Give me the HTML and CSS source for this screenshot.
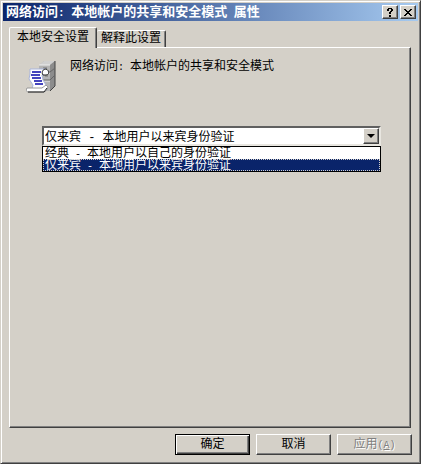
FILE: index.html
```
<!DOCTYPE html>
<html lang="zh-CN">
<head>
  <meta charset="UTF-8" />
  <meta name="viewport" content="width=device-width, initial-scale=1.0"/>
  <title>网络访问: 本地帐户的共享和安全模式 属性</title>
  <link rel="stylesheet" href="styles.css">
</head>
<body>
  <form class="window">
    <header class="titlebar">
      <h1>网络访问<span class="latin">: </span>本地帐户的共享和安全模式<span class="latin"> </span>属性</h1>
      <button type="button" class="caption-btn" aria-label="帮助">
        <svg width="6" height="9" viewBox="0 0 6 9" shape-rendering="crispEdges"><path d="M1 0h4v1h1v2h-1v1h-1v2h-2v-2h1v-1h1v-2h-2v2h-2v-2h1zM2 7h2v2h-2z"/></svg>
      </button>
      <button type="button" class="caption-btn close" aria-label="关闭">
        <svg width="8" height="7" viewBox="0 0 8 7" shape-rendering="crispEdges"><path d="M0 0h2v1h1v1h2v-1h1v-1h2v1h-1v1h-1v1h-1v1h1v1h1v1h1v1h-2v-1h-1v-1h-2v1h-1v1h-2v-1h1v-1h1v-1h1v-1h-1v-1h-1v-1h-1z"/></svg>
      </button>
    </header>

    <main class="content">
      <div class="tabs" role="tablist">
        <button type="button" class="tab active" role="tab" aria-selected="true">本地安全设置</button>
        <button type="button" class="tab" role="tab" aria-selected="false">解释此设置</button>
      </div>

      <section class="panel" role="tabpanel">
        <div class="policy">
          <svg class="policy-icon" width="32" height="32" viewBox="0 0 32 32">
            <!-- server -->
            <path d="M13 4l5-4h11v25l-5 5H13z" fill="#b4b4b4"/>
            <path d="M13 4l5-4h11l-5 4z" fill="#d0d0d0"/>
            <path d="M24 4l5-4v25l-5 5z" fill="#8c8c8c"/>
            <path d="M29 0v25l-5 5" fill="none" stroke="#444"/>
            <path d="M13 4h11M14 12h10M14 20h10" stroke="#eee"/>
            <path d="M14 11h10l5-4M14 19h10l5-5" fill="none" stroke="#666"/>
            <path d="M17 7h4M19 15h3" stroke="#777"/>
            <!-- scroll -->
            <path d="M4 8h16c-3 1-3 4-2 6h-2l1 5 3 5-1 4H6l1-4-4-6 1-5z" fill="#fff" stroke="#a8b4dc"/>
            <path d="M17 14c-2-3 0-6 3-6 3 1 4 6 0 6z" fill="#fff" stroke="#222"/>
            <path d="M1 27h15l4-3 2 2-2 4-2 1H2c-2 0-2-3-1-4z" fill="#fff" stroke="#999"/>
            <path d="M2 31h16l3-4" fill="none" stroke="#222"/>
            <path d="M6 11h9M5 14h9M6 17h9M8 20h8M9 23h8" stroke="#0808a8" stroke-width="1.300"/>
          </svg>
          <label for="mode">网络访问<span class="latin">: </span>本地帐户的共享和安全模式</label>
        </div>

        <div class="combo">
          <select id="mode" name="mode">
            <option>经典 - 本地用户以自己的身份验证</option>
            <option selected>仅来宾 - 本地用户以来宾身份验证</option>
          </select>
          <span class="arrow" aria-hidden="true"><svg width="8" height="4" viewBox="0 0 8 4"><path d="M0 0h8L4 4z"/></svg></span>
          <ul class="dropdown" role="listbox">
            <li role="option">经典<span class="latin"> - </span>本地用户以自己的身份验证</li>
            <li role="option" class="selected" aria-selected="true">仅来宾<span class="latin"> - </span>本地用户以来宾身份验证</li>
          </ul>
        </div>
      </section>
    </main>

    <footer class="buttons">
      <button type="submit" class="btn default">确定</button>
      <button type="button" class="btn">取消</button>
      <button type="button" class="btn" disabled>应用<span class="latin">(<u>A</u>)</span></button>
    </footer>
  </form>
</body>
</html>
```
FILE: styles.css
```
* {
  box-sizing: border-box;
}
body {
  margin: 0;
  font-family: "Liberation Mono", "Noto Sans CJK SC", monospace;
  font-size: 12px;
  line-height: 16px;
  color: #000;
  background: #d4d0c8;
}
button, select {
  font: inherit;
  color: inherit;
  padding: 0;
  border-radius: 0;
}
.latin {
  font-size: 10px;
  line-height: 1;
  white-space: pre;
}
.window {
  display: flex;
  flex-direction: column;
  min-height: 100vh;
  padding: 2px 2px 8px 2px;
  background: #d4d0c8;
  border: 1px solid;
  border-color: #d4d0c8 #404040 #404040 #d4d0c8;
  box-shadow: inset 1px 1px #fff, inset -1px -1px #808080;
}

/* title bar */
.titlebar {
  display: flex;
  align-items: center;
  height: 18px;
  padding: 0 2px 0 3px;
  background: linear-gradient(to right, #0a246a, #a6caf0);
}
.titlebar h1 {
  flex: 1;
  margin: 0;
  padding-top: 2px;
  font-size: 13px;
  line-height: 18px;
  color: #fff;
  white-space: nowrap;
}
.titlebar .latin {
  font-size: 11px;
}
.caption-btn {
  display: flex;
  align-items: center;
  justify-content: center;
  width: 16px;
  height: 14px;
  background: #d4d0c8;
  border: 1px solid;
  border-color: #fff #404040 #404040 #fff;
  box-shadow: inset -1px -1px #808080;
}
.close {
  margin-left: 2px;
}

/* tabs */
.content {
  display: flex;
  flex: 1;
  flex-direction: column;
  padding: 6px 7px 6px 6px;
}
.tabs {
  display: flex;
  align-items: flex-end;
  height: 20px;
}
.tab {
  height: 17px;
  padding: 0 4px;
  background: #d4d0c8;
  border: 1px solid;
  border-color: #fff #404040 transparent #fff;
  border-bottom: 0;
  border-radius: 2px 2px 0 0;
  box-shadow: inset -1px 0 #808080;
}
.tab.active {
  position: relative;
  height: 21px;
  margin-bottom: -1px;
  padding: 0 7px;
}
.tab:not(.active) {
  border-left: 0;
}
.panel {
  flex: 1;
  padding: 13px 29px 13px 16px;
  border: 1px solid;
  border-color: #fff #404040 #404040 #fff;
  box-shadow: inset -1px -1px #808080;
}
.policy {
  display: flex;
  gap: 12px;
}
.policy-icon {
  flex: none;
}
.policy label {
  margin-top: -2px;
}

/* drop-down */
.combo {
  position: relative;
  margin: 33px 0 0 16px;
}
.combo select {
  display: block;
  width: 100%;
  height: 20px;
  padding: 2px 20px 0 1px;
  appearance: none;
  background: #fff;
  border: 2px solid;
  border-color: #606060 #e8e6e0 #e8e6e0 #606060;
  outline: none;
}
.arrow {
  position: absolute;
  top: 2px;
  right: 2px;
  display: flex;
  align-items: center;
  justify-content: center;
  width: 16px;
  height: 16px;
  background: #d4d0c8;
  border: 1px solid;
  border-color: #fff #404040 #404040 #fff;
  box-shadow: inset -1px -1px #808080;
  pointer-events: none;
}
.dropdown {
  position: absolute;
  top: 100%;
  left: 0;
  right: 0;
  margin: 0;
  padding: 0;
  list-style: none;
  line-height: 14px;
  background: #fff;
  border: 1px solid #000;
}
.dropdown li {
  height: 12px;
  padding-left: 2px;
}
.dropdown .selected {
  color: #fff;
  background: #0a246a;
  outline: 1px dotted #d4d0c8;
  outline-offset: -1px;
}

/* bottom buttons */
.buttons {
  display: flex;
  justify-content: flex-end;
  gap: 6px;
  padding-right: 6px;
}
.btn {
  width: 75px;
  height: 21px;
  background: #d4d0c8;
  border: 1px solid;
  border-color: #fff #404040 #404040 #fff;
  box-shadow: inset -1px -1px #808080;
}
.btn.default {
  border-color: #000;
  box-shadow: inset 1px 1px #fff, inset -1px -1px #404040, inset -2px -2px #808080;
}
.btn:disabled {
  color: #808080;
  text-shadow: 1px 1px #fff;
}
```
